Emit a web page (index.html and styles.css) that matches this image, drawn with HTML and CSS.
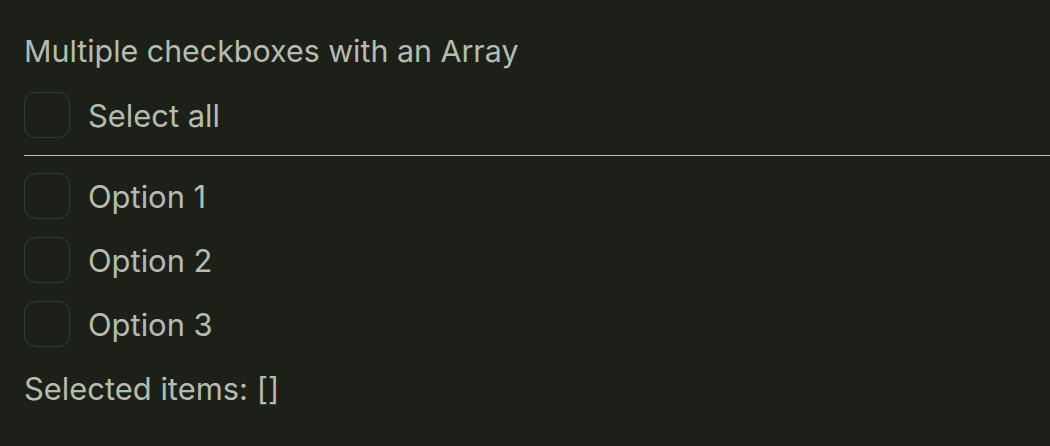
FILE: index.html
```html
<!DOCTYPE html>
<html lang="en">
<head>
<meta charset="utf-8">
<title>Multiple checkboxes</title>
<link rel="stylesheet" href="styles.css">
</head>
<body>
<main class="page">
  <h1 class="title">Multiple checkboxes with an Array</h1>
  <label class="row">
    <span class="box"></span>
    <span class="label">Select all</span>
  </label>
  <hr class="divider">
  <div class="options">
    <label class="row">
      <span class="box"></span>
      <span class="label">Option 1</span>
    </label>
    <label class="row">
      <span class="box"></span>
      <span class="label">Option 2</span>
    </label>
    <label class="row">
      <span class="box"></span>
      <span class="label">Option 3</span>
    </label>
  </div>
  <p class="result">Selected items: []</p>
</main>
</body>
</html>
```
FILE: styles.css
```css
html, body {
  margin: 0;
  padding: 0;
  background: #1d2019;
  height: 100%;
}
body {
  font-family: Inter, "Noto Sans", "Liberation Sans", sans-serif;
  color: #b4bcb0;
  font-size: 30.9px;
  overflow: hidden;
}
.page {
  display: flex;
  flex-direction: column;
  padding: 33px 0 0 24px;
}
.title {
  margin: 0 0 23px 0;
  font-size: 30.4px;
  font-weight: 400;
  line-height: 36px;
}
.row {
  display: flex;
  align-items: center;
  gap: 18px;
  height: 46px;
}
.box {
  width: 44px;
  height: 44px;
  border: 1px solid #2c3f24;
  border-radius: 11px;
  box-sizing: content-box;
  flex: none;
}
.label {
  line-height: 36px;
  padding-top: 2px;
}
.divider {
  margin: 17px 0 17px 0;
  border: 0;
  height: 1px;
  background: #b8c0b2;
}
.options {
  display: flex;
  flex-direction: column;
  gap: 18px;
}
.result {
  margin: 24px 0 0 0;
  line-height: 36px;
}
```
